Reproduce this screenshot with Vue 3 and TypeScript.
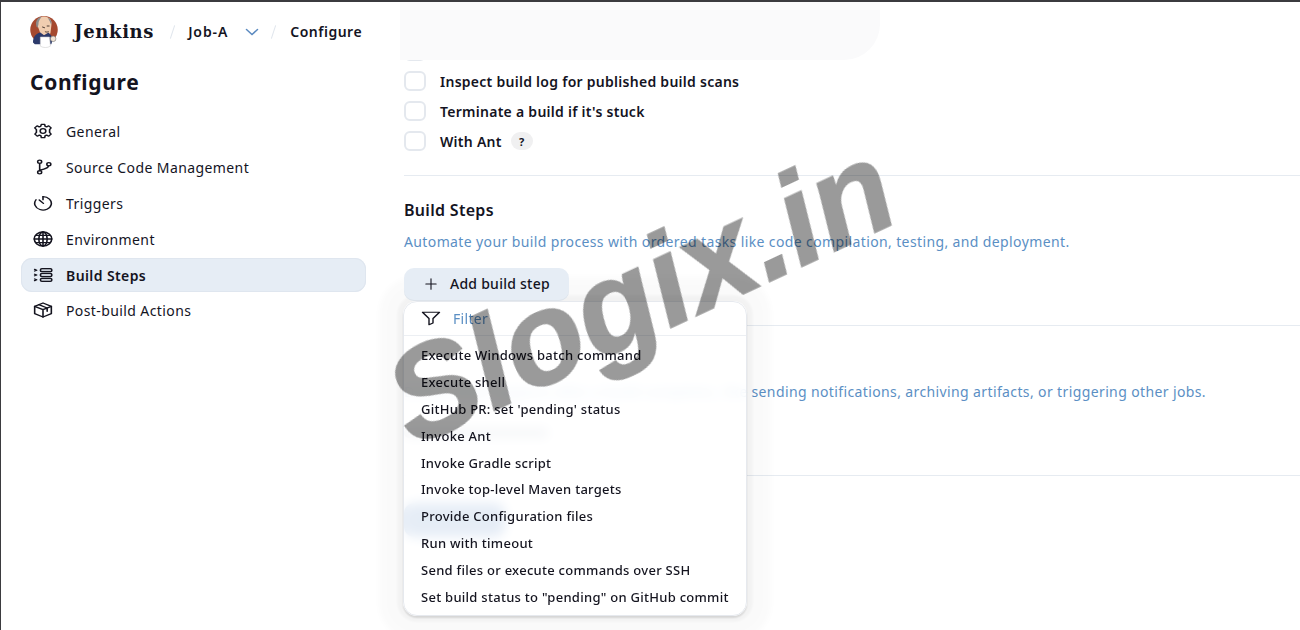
<script setup lang="ts">
const navItems = [
  { label: "General", icon: "gear" },
  { label: "Source Code Management", icon: "branch" },
  { label: "Triggers", icon: "timer" },
  { label: "Environment", icon: "globe" },
  { label: "Build Steps", icon: "list", active: true },
  { label: "Post-build Actions", icon: "cube" },
]

const options = [
  { label: "Inspect build log for published build scans" },
  { label: "Terminate a build if it's stuck" },
  { label: "With Ant", help: true },
]

const buildSteps = [
  "Execute Windows batch command",
  "Execute shell",
  "GitHub PR: set 'pending' status",
  "Invoke Ant",
  "Invoke Gradle script",
  "Invoke top-level Maven targets",
  "Provide Configuration files",
  "Run with timeout",
  "Send files or execute commands over SSH",
  'Set build status to "pending" on GitHub commit',
]
</script>

<template>
  <div class="page">
    <aside class="sidebar">
      <header class="crumbs">
        <svg class="logo" viewBox="0 0 32 36" width="30" height="33">
          <circle cx="16" cy="16" r="15" fill="#a5492f" />
          <path d="M8 9c1-6 6-8 10-7 5 1 7 5 6 10l-1 8c-2 3-9 3-11 0z" fill="#f0cdb0" />
          <path d="M8 13C6 7 9 3 13 2c-1 3-3 4-3 8l-1 4zM20 3c3 1 5 4 4 8-1-3-2-5-4-8z" fill="#8c8c8c" />
          <path d="M4 30c0-6 3-10 8-11l4 3 5-3 5 6-2 7H6z" fill="#2c3a6b" />
          <path d="M12 24h10l1 10c-3 2-8 2-11 0z" fill="#fff" stroke="#c9c9c9" stroke-width=".6" />
          <circle cx="26" cy="26" r="3" fill="#f2e3d3" stroke="#7a7a7a" stroke-width=".7" />
          <path d="M14 13l3 1M19 12l3 0M17 18c1 .8 3 .8 4 0" stroke="#40302a" stroke-width="1" fill="none" />
        </svg>
        <span class="brand">Jenkins</span>
        <span class="slash first" />
        <span class="crumb job">Job-A</span>
        <svg class="chevron" viewBox="0 0 14 8" width="14" height="8">
          <path d="M1.5 1.5 7 6.5l5.5-5" fill="none" stroke="#5b8ac0" stroke-width="1.5" stroke-linecap="round" />
        </svg>
        <span class="slash" />
        <span class="crumb">Configure</span>
      </header>

      <h1 class="side-title">Configure</h1>

      <nav class="nav">
        <a v-for="item in navItems" :key="item.label" class="nav-item" :class="{ active: item.active }">
          <svg class="nav-icon" viewBox="0 0 24 24" width="20" height="16" preserveAspectRatio="none" fill="none" stroke="#14141f" stroke-width="1.9" stroke-linecap="round" stroke-linejoin="round">
            <template v-if="item.icon === 'gear'">
              <circle cx="12" cy="12" r="3.4" />
              <path d="M10 2h4l.6 3 1.8.8 2.5-1.6 2.8 3.2-1.8 2.4v4.4l1.8 2.4-2.8 3.2-2.5-1.6-1.8.8-.6 3h-4l-.6-3-1.8-.8-2.5 1.6-2.8-3.2 1.8-2.4V9.8L2.1 7.4l2.8-3.2 2.5 1.6 1.8-.8z" />
            </template>
            <template v-else-if="item.icon === 'branch'">
              <circle cx="8" cy="4" r="2.4" />
              <circle cx="8" cy="20" r="2.4" />
              <circle cx="19" cy="8" r="2.4" />
              <path d="M8 6.4v11.2M18.5 10.4c-.5 5-7 4-10.5 7.2" />
            </template>
            <template v-else-if="item.icon === 'timer'">
              <path d="M12 2.5a10 10 0 1 1-8.4 4.6" />
              <path d="M12 2.5V7M7.5 7.5l5 5" />
            </template>
            <template v-else-if="item.icon === 'globe'">
              <circle cx="12" cy="12" r="10.5" />
              <ellipse cx="12" cy="12" rx="5" ry="10.5" />
              <path d="M12 1.5v21M1.5 12h21M3.5 6.5h17M3.5 17.5h17" />
            </template>
            <template v-else-if="item.icon === 'list'">
              <rect x="9" y="2.5" width="13.5" height="4.6" rx="1.6" fill="#c9cfd8" />
              <rect x="9" y="9.7" width="13.5" height="4.6" rx="1.6" fill="#c9cfd8" />
              <rect x="9" y="16.9" width="13.5" height="4.6" rx="1.6" fill="#c9cfd8" />
              <path d="M2 3.6l2.4 1.2L2 6M2 10.8 4.4 12 2 13.2M2 18l2.4 1.2L2 20.4" />
            </template>
            <template v-else>
              <path d="M12 1.5 22 6.5v11L12 22.5 2 17.5v-11z" />
              <path d="M2 6.5 12 11.5 22 6.5M12 11.5v11M7 4l10 5v5" />
            </template>
          </svg>
          <span>{{ item.label }}</span>
        </a>
      </nav>
    </aside>

    <main class="content">
      <div class="options">
        <div class="option"><span class="check" /></div>
        <label v-for="opt in options" :key="opt.label" class="option">
          <span class="check" />
          <span class="option-label">{{ opt.label }}</span>
          <span v-if="opt.help" class="help">?</span>
        </label>
      </div>
      <div class="sticky-fade" />

      <section class="section">
        <h2 class="section-title">Build Steps</h2>
        <p class="section-desc">Automate your build process with ordered tasks like code compilation, testing, and deployment.</p>
        <div class="add-wrap">
          <button class="add-btn">
            <svg viewBox="0 0 14 14" width="12" height="12">
              <path d="M7 1v12M1 7h12" stroke="#14141f" stroke-width="1.3" stroke-linecap="round" />
            </svg>
            <span class="add-label">Add build step</span>
          </button>
          <div class="popover">
            <div class="filter">
              <svg viewBox="0 0 20 18" width="20" height="15" preserveAspectRatio="none" fill="none" stroke="#14141f" stroke-width="1.4" stroke-linejoin="round">
                <path d="M1.5 1.5h17L12 9v5.5L8 16.5V9z" />
              </svg>
              <span>Filter</span>
            </div>
            <ul class="menu">
              <li v-for="step in buildSteps" :key="step">{{ step }}</li>
            </ul>
          </div>
        </div>
      </section>

      <section class="section post">
        <p class="section-desc">Define what happens after a build completes, like sending notifications, archiving artifacts, or triggering other jobs.</p>
        <div class="ghost-bar" />
      </section>

      <section class="section bottom">
        <div class="save-bar" />
      </section>
    </main>

    <div class="watermark">Slogix.in</div>
  </div>
</template>

<style>
html,
body {
  margin: 0;
  background: #fff;
}
</style>

<style scoped>
.page {
  position: relative;
  display: flex;
  width: 1300px;
  height: 630px;
  box-sizing: border-box;
  overflow: hidden;
  background: #fff;
  border-top: 2px solid #3b3b3f;
  border-left: 1px solid #3b3b3f;
  font-family: "Noto Sans", "Open Sans", sans-serif;
  color: #14141f;
}

.sidebar {
  width: 383px;
  flex-shrink: 0;
  padding: 0 0 0 20px;
  box-sizing: border-box;
}

.crumbs {
  display: flex;
  align-items: center;
  height: 59px;
  padding-left: 8px;
  font-size: 14px;
  font-weight: 600;
  letter-spacing: 0.5px;
  white-space: nowrap;
}

.logo {
  flex-shrink: 0;
  margin-right: 15px;
}

.brand {
  font-family: "DejaVu Serif", "Liberation Serif", serif;
  font-size: 18px;
  font-weight: 700;
  letter-spacing: 0.65px;
}

.slash {
  width: 1px;
  height: 14px;
  margin: 0 16px 0 14px;
  background: #dfe5ec;
  transform: rotate(18deg);
}

.slash.first {
  margin: 0 15px 0 18px;
}

.job {
  letter-spacing: 0.9px;
}

.chevron {
  margin-left: 17px;
  margin-right: 0;
}

.side-title {
  margin: 8px 0 17px 9px;
  height: 27px;
  font-size: 21px;
  line-height: 27px;
  font-weight: 700;
  letter-spacing: 0.7px;
}

.nav {
  display: flex;
  flex-direction: column;
  width: 345px;
}

.nav-item {
  display: flex;
  align-items: center;
  gap: 13px;
  height: 36px;
  padding-left: 12px;
  box-sizing: border-box;
  border-radius: 11px;
  font-size: 14px;
  letter-spacing: 0.4px;
}

.nav-item.active {
  height: 34px;
  margin: 1px 0;
  background: #e6edf5;
  box-shadow: inset 0 0 0 1px #dfe6ef;
  font-weight: 600;
}

.nav-item:last-child {
  margin-top: -1px;
}

.nav-icon {
  flex-shrink: 0;
}

.content {
  position: relative;
  flex: 1;
  min-width: 0;
  padding: 0 0 0 20px;
}

.sticky-fade {
  position: absolute;
  top: 0;
  left: 16px;
  width: 480px;
  height: 58px;
  background: #fafafb;
  border-radius: 0 0 36px 0;
}

.options {
  display: flex;
  flex-direction: column;
  gap: 10px;
  padding: 39px 0 24px;
  border-bottom: 1px solid #e6ebf1;
}

.option {
  display: flex;
  align-items: center;
  height: 20px;
  font-size: 14px;
  font-weight: 600;
  letter-spacing: 0.27px;
}

.check {
  width: 22px;
  height: 20px;
  margin-right: 14px;
  box-sizing: border-box;
  border: 2px solid #e4e8ee;
  border-radius: 6px;
  background: #fff;
}

.help {
  display: flex;
  align-items: center;
  justify-content: center;
  width: 22px;
  height: 18px;
  margin-left: 9px;
  border-radius: 9px;
  background: #f0f0f1;
  font-size: 11px;
  font-weight: 700;
}

.section {
  padding-top: 24px;
  border-bottom: 1px solid #e6ebf1;
}

.section-title {
  margin: 0;
  height: 20px;
  font-size: 16px;
  line-height: 20px;
  font-weight: 600;
  letter-spacing: 0.3px;
}

.section-desc {
  margin: 12px 0 0;
  height: 20px;
  font-size: 14px;
  line-height: 20px;
  letter-spacing: 0.38px;
  color: #5b8fc4;
  white-space: nowrap;
}

.add-wrap {
  position: relative;
  margin-top: 16px;
  padding-bottom: 24px;
}

.add-btn {
  position: relative;
  z-index: 3;
  display: flex;
  align-items: center;
  gap: 13px;
  width: 165px;
  height: 33px;
  padding: 0 0 2px 21px;
  border: none;
  border-radius: 10px;
  background: #e6edf5;
  box-shadow: inset 0 -1px 0 #dde3ea;
  color: #14141f;
  font: inherit;
  font-size: 14px;
  font-weight: 500;
  letter-spacing: 0.25px;
}

.popover {
  position: absolute;
  top: 33px;
  left: -1px;
  z-index: 2;
  width: 344px;
  height: 315px;
  box-sizing: border-box;
  border: 1px solid #e6e9ee;
  border-radius: 14px;
  background: rgba(255, 255, 255, 0.88);
  backdrop-filter: blur(6px);
  box-shadow:
    0 2px 2px rgba(0, 0, 0, 0.12),
    0 0 3px 6px rgba(0, 0, 0, 0.035),
    0 0 6px 24px rgba(0, 0, 0, 0.02);
}

.filter {
  display: flex;
  align-items: center;
  gap: 12px;
  height: 34px;
  padding-left: 17px;
  box-sizing: border-box;
  border-bottom: 1px solid #eceff3;
  color: #5b8fc4;
  font-size: 14px;
  letter-spacing: 0.3px;
}

.menu {
  margin: 0;
  padding: 6px 0 0 17px;
  list-style: none;
}

.menu li {
  height: 26.9px;
  font-size: 13px;
  line-height: 26.9px;
  font-weight: 500;
  letter-spacing: 0.27px;
  white-space: nowrap;
}

/* the title and buttons of this section sit behind the popover */
.post {
  height: 105px;
  padding-top: 44px;
}

.ghost-bar {
  width: 145px;
  height: 10px;
  margin-top: 26px;
  border-radius: 5px;
  background: #afb8c8;
}

.bottom {
  padding-top: 27px;
  border-bottom: none;
}

.save-bar {
  width: 101px;
  height: 34px;
  border-radius: 10px;
  background: #2f69b4;
}

/* origin is the box corner so the baseline angle is easy to place */
.watermark {
  position: absolute;
  left: 366px;
  top: 346px;
  z-index: 5;
  font-family: "Liberation Sans", Arial, sans-serif;
  font-size: 130px;
  line-height: 130px;
  font-weight: 700;
  font-style: italic;
  color: #9a9a9a;
  -webkit-text-stroke: 1.5px #9a9a9a;
  mix-blend-mode: multiply;
  transform: rotate(-25deg);
  transform-origin: 0 0;
  white-space: nowrap;
  pointer-events: none;
}
</style>
